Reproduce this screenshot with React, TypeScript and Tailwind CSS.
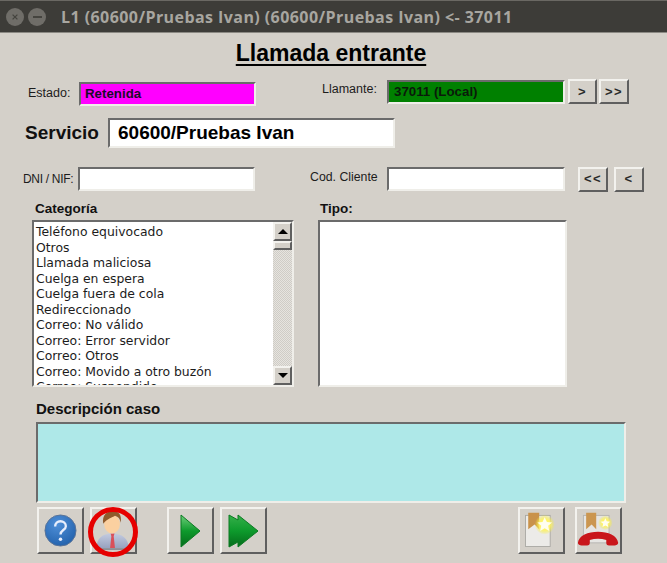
import type { ReactNode } from "react";

const sunken = "border-2 border-t-[#6b6b6b] border-l-[#6b6b6b] border-b-[#efeee9] border-r-[#efeee9]";
const raised = "border-2 border-t-[#f3f2ee] border-l-[#f3f2ee] border-b-[#5f5f5f] border-r-[#5f5f5f] bg-[#d4d0c9] flex items-center justify-center";

const categorias = [
  "Teléfono equivocado",
  "Otros",
  "Llamada maliciosa",
  "Cuelga en espera",
  "Cuelga fuera de cola",
  "Redireccionado",
  "Correo: No válido",
  "Correo: Error servidor",
  "Correo: Otros",
  "Correo: Movido a otro buzón",
  "Correo: Suspendido",
];

function SmallButton(props: { label: string; className: string }) {
  return (
    <div className={`${raised} h-[25px] text-[13px] font-bold text-[#2a2a2a] tracking-[1.5px] ${props.className}`}>
      {props.label}
    </div>
  );
}

function IconButton(props: { children: ReactNode; className?: string }) {
  return <div className={`${raised} relative w-[47px] h-[47px] ${props.className ?? ""}`}>{props.children}</div>;
}

function Bookmark() {
  return (
    <svg viewBox="0 0 47 47" className="w-[43px] h-[43px]">
      <defs>
        <radialGradient id="glow">
          <stop offset="0.5" stopColor="#fff36a" />
          <stop offset="1" stopColor="#f6ee30" stopOpacity="0" />
        </radialGradient>
      </defs>
      <rect x="6" y="7" width="27" height="34" fill="#ecebe8" stroke="#a9a8a4" />
      <path d="M9 4h12v18l-5-5-7 5z" fill="#c9924a" />
      <circle cx="27" cy="17" r="11" fill="url(#glow)" />
      <path d="M27 9l2.400 5.200 5.600.6-4.200 3.600 1.200 5.600-5-2.900-5 2.900 1.200-5.600-4.200-3.600 5.600-.6z" fill="#fffef0" />
    </svg>
  );
}

function HangupBookmark() {
  return (
    <svg viewBox="0 0 47 47" className="w-[45px] h-[43px]">
      <defs>
        <radialGradient id="glow2">
          <stop offset="0.45" stopColor="#fff36a" />
          <stop offset="1" stopColor="#f6ee30" stopOpacity="0" />
        </radialGradient>
      </defs>
      <rect x="7" y="7" width="28" height="30" fill="#e6e5e2" stroke="#b5b4b0" />
      <path d="M10 4h11v18l-5-5-6 5z" fill="#cb9650" />
      <circle cx="31" cy="15" r="8" fill="url(#glow2)" />
      <path d="M31 10l1.500 3.400 3.700.4-2.800 2.400.8 3.600-3.200-1.900-3.200 1.900.8-3.600-2.800-2.400 3.700-.4z" fill="#fffef0" />
      <path d="M1 37c1-8 11-12 22-12s21 4 22 12c0 2-2 3-4 3h-6c-2 0-3-1-3-3v-3c-6-2-12-2-18 0v3c0 2-1 3-3 3H5c-2 0-4-1-4-3z" fill="#c9161b" />
    </svg>
  );
}

export default function App() {
  return (
    <div className="w-[667px] h-[563px] bg-[#d4d0c9] overflow-hidden font-['Liberation_Sans',sans-serif] text-[#1c1c1c]">
      <div className="h-[33px] bg-[#3d3c38] border-t border-t-[#6a6863] border-b border-b-[#8b8983] flex items-center pl-[6px]">
        <div className="w-[18px] h-[18px] rounded-full bg-[#6f6d68] flex items-center justify-center">
          <svg viewBox="0 0 10 10" className="w-[8px] h-[8px]">
            <path d="M2 2l6 6M8 2l-6 6" stroke="#45443f" strokeWidth="1.6" />
          </svg>
        </div>
        <div className="w-[18px] h-[18px] rounded-full bg-[#6f6d68] flex items-center justify-center ml-[4px]">
          <div className="w-[9px] h-[2px] bg-[#45443f]" />
        </div>
        <span className="ml-[15px] font-['Open_Sans',sans-serif] font-bold text-[16px] tracking-[0.43px] text-[#a8a6a0] whitespace-nowrap">
          L1 (60600/Pruebas Ivan) (60600/Pruebas Ivan) {"<-"} 37011
        </span>
      </div>

      <div className="h-[38px] flex items-center justify-center pr-[5px]">
        <h1 className="text-[23px] font-bold text-black underline underline-offset-[3px] leading-none mt-[2px]">Llamada entrante</h1>
      </div>

      <div className="flex items-start h-[48px] mt-[10px]">
        <span className="ml-[28px] w-[51px] mt-[5px] text-[12.500px] leading-[14px]">Estado:</span>
        <div className={`${sunken} mt-[1px] w-[177px] h-[24px] bg-[#ff00ff] text-[13.300px] font-bold text-[#1a0a2a] pl-[4px] leading-[20px]`}>Retenida</div>
        <span className="ml-[66px] w-[65px] mt-[1px] text-[12.500px] leading-[14px]">Llamante:</span>
        <div className={`${sunken} mt-[-1px] w-[178px] h-[24px] bg-[#008000] text-[13.300px] font-bold text-[#0a1a0a] pl-[5px] leading-[19px]`}>37011 (Local)</div>
        <SmallButton label=">" className="ml-[3px] mt-[-2px] w-[29px]" />
        <SmallButton label=">>" className="ml-[2px] mt-[-2px] w-[30px]" />
      </div>

      <div className="flex items-center h-[30px] -mt-[11px]">
        <span className="ml-[25px] w-[83px] text-[19px] font-bold text-[#111] mt-[1px]">Servicio</span>
        <div className={`${sunken} w-[287px] h-[30px] bg-white text-[19px] font-bold text-black pl-[8px] leading-[26px]`}>60600/Pruebas Ivan</div>
      </div>

      <div className="flex items-center h-[24px] mt-[19px]">
        <span className="ml-[23px] w-[55px] text-[12px] tracking-[-0.3px]">DNI / NIF:</span>
        <div className={`${sunken} w-[177px] h-[24px] bg-white`} />
        <span className="ml-[55px] w-[77px] text-[12.300px] -mt-[3px]">Cod. Cliente</span>
        <div className={`${sunken} w-[178px] h-[24px] bg-white`} />
        <SmallButton label="<<" className="ml-[13px] w-[30px]" />
        <SmallButton label="<" className="ml-[6px] w-[30px]" />
      </div>

      <div className="flex mt-[8px] h-[187px]">
        <div className="ml-[32px] w-[262px]">
          <div className="h-[21px] pl-[3px] pt-[3px] text-[13.500px] font-bold text-[#111] leading-[14px]">Categoría</div>
          <div className={`${sunken} h-[167px] bg-white flex overflow-hidden`}>
            <div className="flex-1 overflow-hidden pl-[2px] pt-[2px] font-['DejaVu_Sans',sans-serif] text-[12.400px] leading-[15.550px] text-[#1c1c1c]">
              {categorias.map((c) => (
                <div key={c} className="whitespace-nowrap">{c}</div>
              ))}
            </div>
            <div className="w-[19px] flex flex-col bg-[repeating-conic-gradient(#cfccc6_0_25%,#e6e4df_0_50%)] bg-[length:2px_2px]">
              <div className={`${raised} h-[19px] w-[19px]`}>
                <div className="w-0 h-0 border-x-[5px] border-x-transparent border-b-[5px] border-b-black" />
              </div>
              <div className={`${raised} h-[9px] w-[19px]`} />
              <div className="flex-1" />
              <div className={`${raised} h-[19px] w-[19px]`}>
                <div className="w-0 h-0 border-x-[5px] border-x-transparent border-t-[5px] border-t-black" />
              </div>
            </div>
          </div>
        </div>
        <div className="ml-[24px] w-[249px]">
          <div className="h-[21px] pl-[2px] pt-[3px] text-[13.500px] font-bold text-[#111] leading-[14px]">Tipo:</div>
          <div className={`${sunken} h-[167px] bg-white`} />
        </div>
      </div>

      <div className="ml-[36px] mt-[15px] h-[21px] text-[15px] font-bold text-[#111] leading-[16px]">Descripción caso</div>
      <div className={`${sunken} ml-[36px] w-[590px] h-[81px] bg-[#aee8e8]`} />

      <div className="flex ml-[37px] mt-[4px]">
        <IconButton>
          <svg viewBox="0 0 34 34" className="w-[33px] h-[33px]">
            <defs>
              <radialGradient id="help" cx="0.4" cy="0.3" r="0.8">
                <stop offset="0" stopColor="#4f8fd8" />
                <stop offset="1" stopColor="#1f5ea8" />
              </radialGradient>
            </defs>
            <circle cx="17" cy="17" r="16" fill="url(#help)" stroke="#5a7397" />
            <path d="M11.500 13c0-3.500 2.500-5.500 5.500-5.500s5.500 2 5.500 5c0 4-5.500 4-5.500 8.500" fill="none" stroke="#e8eefc" strokeWidth="2.400" />
            <circle cx="17" cy="26" r="1.800" fill="#e8eefc" />
          </svg>
        </IconButton>
        <IconButton className="ml-[6px]">
          <svg viewBox="0 0 40 44" className="w-[40px] h-[43px]">
            <defs>
              <linearGradient id="suit" x1="0" y1="0" x2="0" y2="1">
                <stop offset="0" stopColor="#c3cbe0" />
                <stop offset="1" stopColor="#97a2bf" />
              </linearGradient>
            </defs>
            <path d="M2 40c0-10 6-15 16-15s17 5 17 15z" fill="url(#suit)" />
            <path d="M16.500 25h4l-.8 3 1.300 12h-5l1.300-12z" fill="#d9505a" />
            <ellipse cx="18" cy="15.500" rx="8" ry="9.500" fill="#fbd0a0" />
            <path d="M9 15c-1.500-9 4-13 10-13 6 0 9 4 8 12-1-4-2.500-6-6-7-3 2-8 3-12 8z" fill="#8f5a2b" />
            <rect x="3" y="40" width="32" height="2" fill="#8c8f96" />
          </svg>
          <div className="absolute left-[-4px] top-[-2px] w-[50px] h-[50px] rounded-full border-[5px] border-[#e60000]" />
        </IconButton>
        <IconButton className="ml-[30px]">
          <svg viewBox="0 0 21 34" className="w-[21px] h-[34px]">
            <defs>
              <linearGradient id="play" x1="0" y1="0" x2="0" y2="1">
                <stop offset="0" stopColor="#6fcf7c" />
                <stop offset="0.5" stopColor="#0d9a2c" />
                <stop offset="1" stopColor="#056b1b" />
              </linearGradient>
            </defs>
            <path d="M1 1l19 16L1 33z" fill="url(#play)" stroke="#0a7a22" />
          </svg>
        </IconButton>
        <IconButton className="ml-[6px]">
          <svg viewBox="0 0 31 34" className="w-[31px] h-[34px]">
            <defs>
              <linearGradient id="play2" x1="0" y1="0" x2="0" y2="1">
                <stop offset="0" stopColor="#35b04a" />
                <stop offset="0.5" stopColor="#0d9a2c" />
                <stop offset="1" stopColor="#056b1b" />
              </linearGradient>
            </defs>
            <path d="M1 1l9 5V1l20 16-20 16v-5l-9 5z" fill="url(#play2)" stroke="#0a7a22" />
          </svg>
        </IconButton>
        <IconButton className="ml-[251px]">
          <Bookmark />
        </IconButton>
        <IconButton className="ml-[10px]">
          <HangupBookmark />
        </IconButton>
      </div>
    </div>
  );
}
